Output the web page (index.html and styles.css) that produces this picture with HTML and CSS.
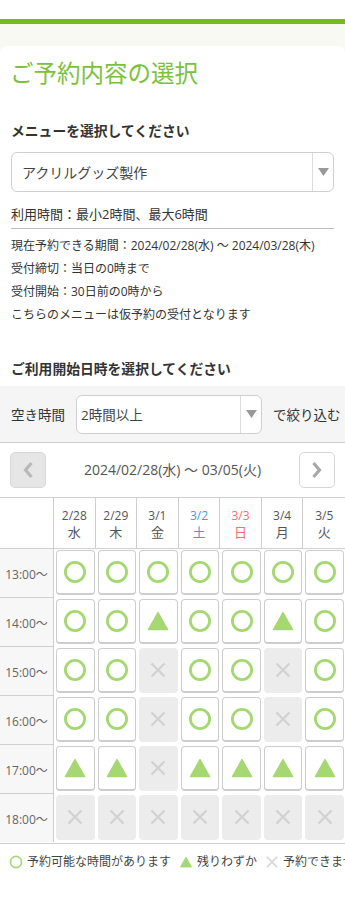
FILE: index.html
```html
<!DOCTYPE html>
<html lang="ja">
<head>
<meta charset="utf-8">
<title>ご予約内容の選択</title>
<link rel="stylesheet" href="styles.css">
</head>
<body>
<svg class="defs" width="0" height="0" aria-hidden="true">
  <defs>
    <symbol id="i-ok" viewBox="0 0 24 24"><circle cx="12" cy="12" r="9.6" fill="none" stroke="#a5d873" stroke-width="2.8"/></symbol>
    <symbol id="i-few" viewBox="0 0 24 24"><polygon points="12,3.6 21.6,20.6 2.4,20.6" fill="#a5d873" stroke="#a5d873" stroke-width="1.4" stroke-linejoin="round"/></symbol>
    <symbol id="i-ng" viewBox="0 0 24 24"><path d="M5.5 5.5L18.5 18.5M18.5 5.5L5.5 18.5" stroke="#d2d2d2" stroke-width="2.4" fill="none"/></symbol>
    <symbol id="i-ng-lg" viewBox="0 0 24 24"><path d="M3 3L21 21M21 3L3 21" stroke="#d6d6d6" stroke-width="3" fill="none"/></symbol>
  </defs>
</svg>
<div class="topline"></div>
<div class="page">
  <main class="card">
    <h1 class="title">ご予約内容の選択</h1>

    <section class="menu">
      <h2 class="label">メニューを選択してください</h2>
      <div class="select select-menu">
        <span class="select-text">アクリルグッズ製作</span>
        <span class="select-arrow"><svg width="11" height="8" viewBox="0 0 11 8"><polygon points="0,0 11,0 5.5,8" fill="#999"/></svg></span>
      </div>
      <p class="usage">利用時間：最小2時間、最大6時間</p>
      <ul class="info">
        <li>現在予約できる期間：2024/02/28(水) ～ 2024/03/28(木)</li>
        <li>受付締切：当日の0時まで</li>
        <li>受付開始：30日前の0時から</li>
        <li>こちらのメニューは仮予約の受付となります</li>
      </ul>
    </section>

    <h2 class="label label-date">ご利用開始日時を選択してください</h2>

    <div class="filter">
      <span class="filter-label">空き時間</span>
      <div class="select select-filter">
        <span class="select-text">2時間以上</span>
        <span class="select-arrow"><svg width="11" height="8" viewBox="0 0 11 8"><polygon points="0,0 11,0 5.5,8" fill="#999"/></svg></span>
      </div>
      <span class="filter-label">で絞り込む</span>
    </div>

    <div class="nav">
      <button class="nav-btn nav-prev" type="button" aria-label="前へ"><svg width="12" height="18" viewBox="0 0 12 18"><polyline points="9.5,2 3.5,9 9.5,16" fill="none" stroke="#b8b8b8" stroke-width="3.2"/></svg></button>
      <span class="nav-label">2024/02/28(水) ～ 03/05(火)</span>
      <button class="nav-btn nav-next" type="button" aria-label="次へ"><svg width="12" height="18" viewBox="0 0 12 18"><polyline points="2.5,2 8.5,9 2.5,16" fill="none" stroke="#a8a8a8" stroke-width="3.2"/></svg></button>
    </div>

    <div class="table">
      <div class="thead">
        <div class="th th-corner"></div>
        <div class="th"><span>2/28</span><span class="wd">水</span></div>
        <div class="th"><span>2/29</span><span class="wd">木</span></div>
        <div class="th"><span>3/1</span><span class="wd">金</span></div>
        <div class="th sat"><span>3/2</span><span class="wd">土</span></div>
        <div class="th sun"><span>3/3</span><span class="wd">日</span></div>
        <div class="th"><span>3/4</span><span class="wd">月</span></div>
        <div class="th th-last"><span>3/5</span><span class="wd">火</span></div>
      </div>
      <div class="tbody">
        <div class="time">13:00～</div>
        <div class="td"><span class="slot"><svg class="ic"><use href="#i-ok"/></svg></span></div>
        <div class="td"><span class="slot"><svg class="ic"><use href="#i-ok"/></svg></span></div>
        <div class="td"><span class="slot"><svg class="ic"><use href="#i-ok"/></svg></span></div>
        <div class="td"><span class="slot"><svg class="ic"><use href="#i-ok"/></svg></span></div>
        <div class="td"><span class="slot"><svg class="ic"><use href="#i-ok"/></svg></span></div>
        <div class="td"><span class="slot"><svg class="ic"><use href="#i-ok"/></svg></span></div>
        <div class="td"><span class="slot"><svg class="ic"><use href="#i-ok"/></svg></span></div>

        <div class="time">14:00～</div>
        <div class="td"><span class="slot"><svg class="ic"><use href="#i-ok"/></svg></span></div>
        <div class="td"><span class="slot"><svg class="ic"><use href="#i-ok"/></svg></span></div>
        <div class="td"><span class="slot"><svg class="ic"><use href="#i-few"/></svg></span></div>
        <div class="td"><span class="slot"><svg class="ic"><use href="#i-ok"/></svg></span></div>
        <div class="td"><span class="slot"><svg class="ic"><use href="#i-ok"/></svg></span></div>
        <div class="td"><span class="slot"><svg class="ic"><use href="#i-few"/></svg></span></div>
        <div class="td"><span class="slot"><svg class="ic"><use href="#i-ok"/></svg></span></div>

        <div class="time">15:00～</div>
        <div class="td"><span class="slot"><svg class="ic"><use href="#i-ok"/></svg></span></div>
        <div class="td"><span class="slot"><svg class="ic"><use href="#i-ok"/></svg></span></div>
        <div class="td"><span class="slot slot-ng"><svg class="ic"><use href="#i-ng"/></svg></span></div>
        <div class="td"><span class="slot"><svg class="ic"><use href="#i-ok"/></svg></span></div>
        <div class="td"><span class="slot"><svg class="ic"><use href="#i-ok"/></svg></span></div>
        <div class="td"><span class="slot slot-ng"><svg class="ic"><use href="#i-ng"/></svg></span></div>
        <div class="td"><span class="slot"><svg class="ic"><use href="#i-ok"/></svg></span></div>

        <div class="time">16:00～</div>
        <div class="td"><span class="slot"><svg class="ic"><use href="#i-ok"/></svg></span></div>
        <div class="td"><span class="slot"><svg class="ic"><use href="#i-ok"/></svg></span></div>
        <div class="td"><span class="slot slot-ng"><svg class="ic"><use href="#i-ng"/></svg></span></div>
        <div class="td"><span class="slot"><svg class="ic"><use href="#i-ok"/></svg></span></div>
        <div class="td"><span class="slot"><svg class="ic"><use href="#i-ok"/></svg></span></div>
        <div class="td"><span class="slot slot-ng"><svg class="ic"><use href="#i-ng"/></svg></span></div>
        <div class="td"><span class="slot"><svg class="ic"><use href="#i-ok"/></svg></span></div>

        <div class="time">17:00～</div>
        <div class="td"><span class="slot"><svg class="ic"><use href="#i-few"/></svg></span></div>
        <div class="td"><span class="slot"><svg class="ic"><use href="#i-few"/></svg></span></div>
        <div class="td"><span class="slot slot-ng"><svg class="ic"><use href="#i-ng"/></svg></span></div>
        <div class="td"><span class="slot"><svg class="ic"><use href="#i-few"/></svg></span></div>
        <div class="td"><span class="slot"><svg class="ic"><use href="#i-few"/></svg></span></div>
        <div class="td"><span class="slot"><svg class="ic"><use href="#i-few"/></svg></span></div>
        <div class="td"><span class="slot"><svg class="ic"><use href="#i-few"/></svg></span></div>

        <div class="time time-last">18:00～</div>
        <div class="td"><span class="slot slot-ng"><svg class="ic"><use href="#i-ng"/></svg></span></div>
        <div class="td"><span class="slot slot-ng"><svg class="ic"><use href="#i-ng"/></svg></span></div>
        <div class="td"><span class="slot slot-ng"><svg class="ic"><use href="#i-ng"/></svg></span></div>
        <div class="td"><span class="slot slot-ng"><svg class="ic"><use href="#i-ng"/></svg></span></div>
        <div class="td"><span class="slot slot-ng"><svg class="ic"><use href="#i-ng"/></svg></span></div>
        <div class="td"><span class="slot slot-ng"><svg class="ic"><use href="#i-ng"/></svg></span></div>
        <div class="td"><span class="slot slot-ng"><svg class="ic"><use href="#i-ng"/></svg></span></div>
      </div>
    </div>

    <div class="legend">
      <span class="legend-item"><svg class="lg-ic"><use href="#i-ok"/></svg>予約可能な時間があります</span>
      <span class="legend-item"><svg class="lg-ic"><use href="#i-few"/></svg>残りわずか</span>
      <span class="legend-item"><svg class="lg-ic"><use href="#i-ng-lg"/></svg>予約できません</span>
    </div>
  </main>
</div>
</body>
</html>
```
FILE: styles.css
```css
* { box-sizing: border-box; }

html, body {
  margin: 0;
  padding: 0;
  overflow-x: hidden;
}

body {
  background: #fff;
  color: #333;
  font-family: "Open Sans", "Noto Sans CJK JP", sans-serif;
  font-size: 12px;
}

.defs { position: absolute; width: 0; height: 0; overflow: hidden; }

.topline {
  height: 24px;
  border-bottom: 5px solid #6cbf1f;
  background: #fff;
}

.page {
  background: #f7f9f2;
  padding-top: 22px;
}

.card {
  background: #fff;
  border-radius: 7px 7px 0 0;
  padding-bottom: 30px;
}

.title {
  margin: 0;
  padding: 12px 11px 0 10px;
  font-size: 23.5px;
  line-height: 30px;
  font-weight: 400;
  color: #7bc23c;
}

.menu { padding: 0 11px; }

.label {
  margin: 33px 0 0;
  font-size: 13.8px;
  line-height: 20px;
  font-weight: 700;
  color: #333;
}

.label-date {
  margin: 33px 11px 0;
}

.select {
  display: flex;
  align-items: stretch;
  border: 1px solid #cfcfcf;
  border-radius: 6px;
  background: #fff;
  overflow: hidden;
}

.select-text {
  flex: 1;
  display: flex;
  align-items: center;
  color: #444;
}

.select-arrow {
  width: 21px;
  border-left: 1px solid #dcdcdc;
  display: flex;
  align-items: center;
  justify-content: center;
}

.select-menu {
  margin-top: 11px;
  height: 40px;
}

.select-menu .select-text {
  padding-left: 10px;
  font-size: 14px;
}

.usage {
  margin: 12px 0 0;
  font-size: 13px;
  line-height: 20px;
  padding-bottom: 4px;
  border-bottom: 1px solid #bdbdbd;
  color: #333;
}

.info {
  list-style: none;
  margin: 0;
  padding: 5px 0 0;
}

.info li {
  font-size: 12px;
  line-height: 23px;
  color: #333;
}

.filter {
  margin-top: 7px;
  height: 57px;
  background: #f5f5f5;
  border-bottom: 1px solid #cfcfcf;
  display: flex;
  align-items: center;
  gap: 11px;
  padding: 0 11px;
  white-space: nowrap;
}

.filter-label {
  font-size: 13.5px;
  color: #333;
}

.select-filter {
  width: 186px;
  height: 39px;
  flex: none;
}

.select-filter .select-text {
  padding-left: 4px;
  font-size: 13.5px;
}

.nav {
  display: flex;
  align-items: center;
  justify-content: space-between;
  padding: 9px 10px 9px 10px;
}

.nav-btn {
  width: 36px;
  height: 36px;
  border-radius: 5px;
  border: 1px solid #d6d6d6;
  background: #fff;
  padding: 0;
  display: flex;
  align-items: center;
  justify-content: center;
}

.nav-prev {
  background: #e6e6e6;
  border-color: #d8d8d8;
}

.nav-label {
  font-size: 14px;
  color: #555;
  line-height: 20px;
}

.table {
  border-top: 1px solid #cfcfcf;
  border-bottom: 1px solid #cfcfcf;
}

.thead, .tbody {
  display: grid;
  grid-template-columns: 54px repeat(7, 1fr);
}

.thead {
  border-bottom: 1px solid #cfcfcf;
  height: 51px;
}

.th {
  border-right: 1px solid #cfcfcf;
  display: flex;
  flex-direction: column;
  align-items: center;
  justify-content: center;
  color: #555;
  font-size: 12px;
  line-height: 17px;
  padding-top: 1px;
}

.th .wd { font-size: 13px; }

.th-last { border-right: none; }

.th.sat { color: #2ea7e0; }
.th.sun { color: #f26d6d; }

.time {
  height: 49px;
  background: #f7f7f7;
  border-right: 1px solid #cfcfcf;
  border-bottom: 1px solid #cfcfcf;
  display: flex;
  align-items: center;
  justify-content: center;
  font-size: 12px;
  color: #666;
  padding-top: 1px;
}

.time-last { border-bottom: none; height: 48px; }

.td {
  padding: 1px 1px 3px 2px;
  height: 49px;
}

.slot {
  display: flex;
  align-items: center;
  justify-content: center;
  width: 100%;
  height: 100%;
  background: #fff;
  border: 1px solid #cdcdcd;
  border-bottom-width: 2px;
  border-radius: 4px;
}

.slot-ng {
  background: #ececec;
  border-color: #ececec;
}

.ic {
  width: 24px;
  height: 24px;
}

.legend {
  display: flex;
  align-items: center;
  gap: 8px;
  padding: 8px 0 0 9px;
  white-space: nowrap;
  overflow: hidden;
  font-size: 12px;
  line-height: 20px;
  color: #444;
}

.legend-item {
  display: flex;
  align-items: center;
  gap: 4px;
}

.lg-ic {
  width: 14px;
  height: 14px;
  flex: none;
}
```
